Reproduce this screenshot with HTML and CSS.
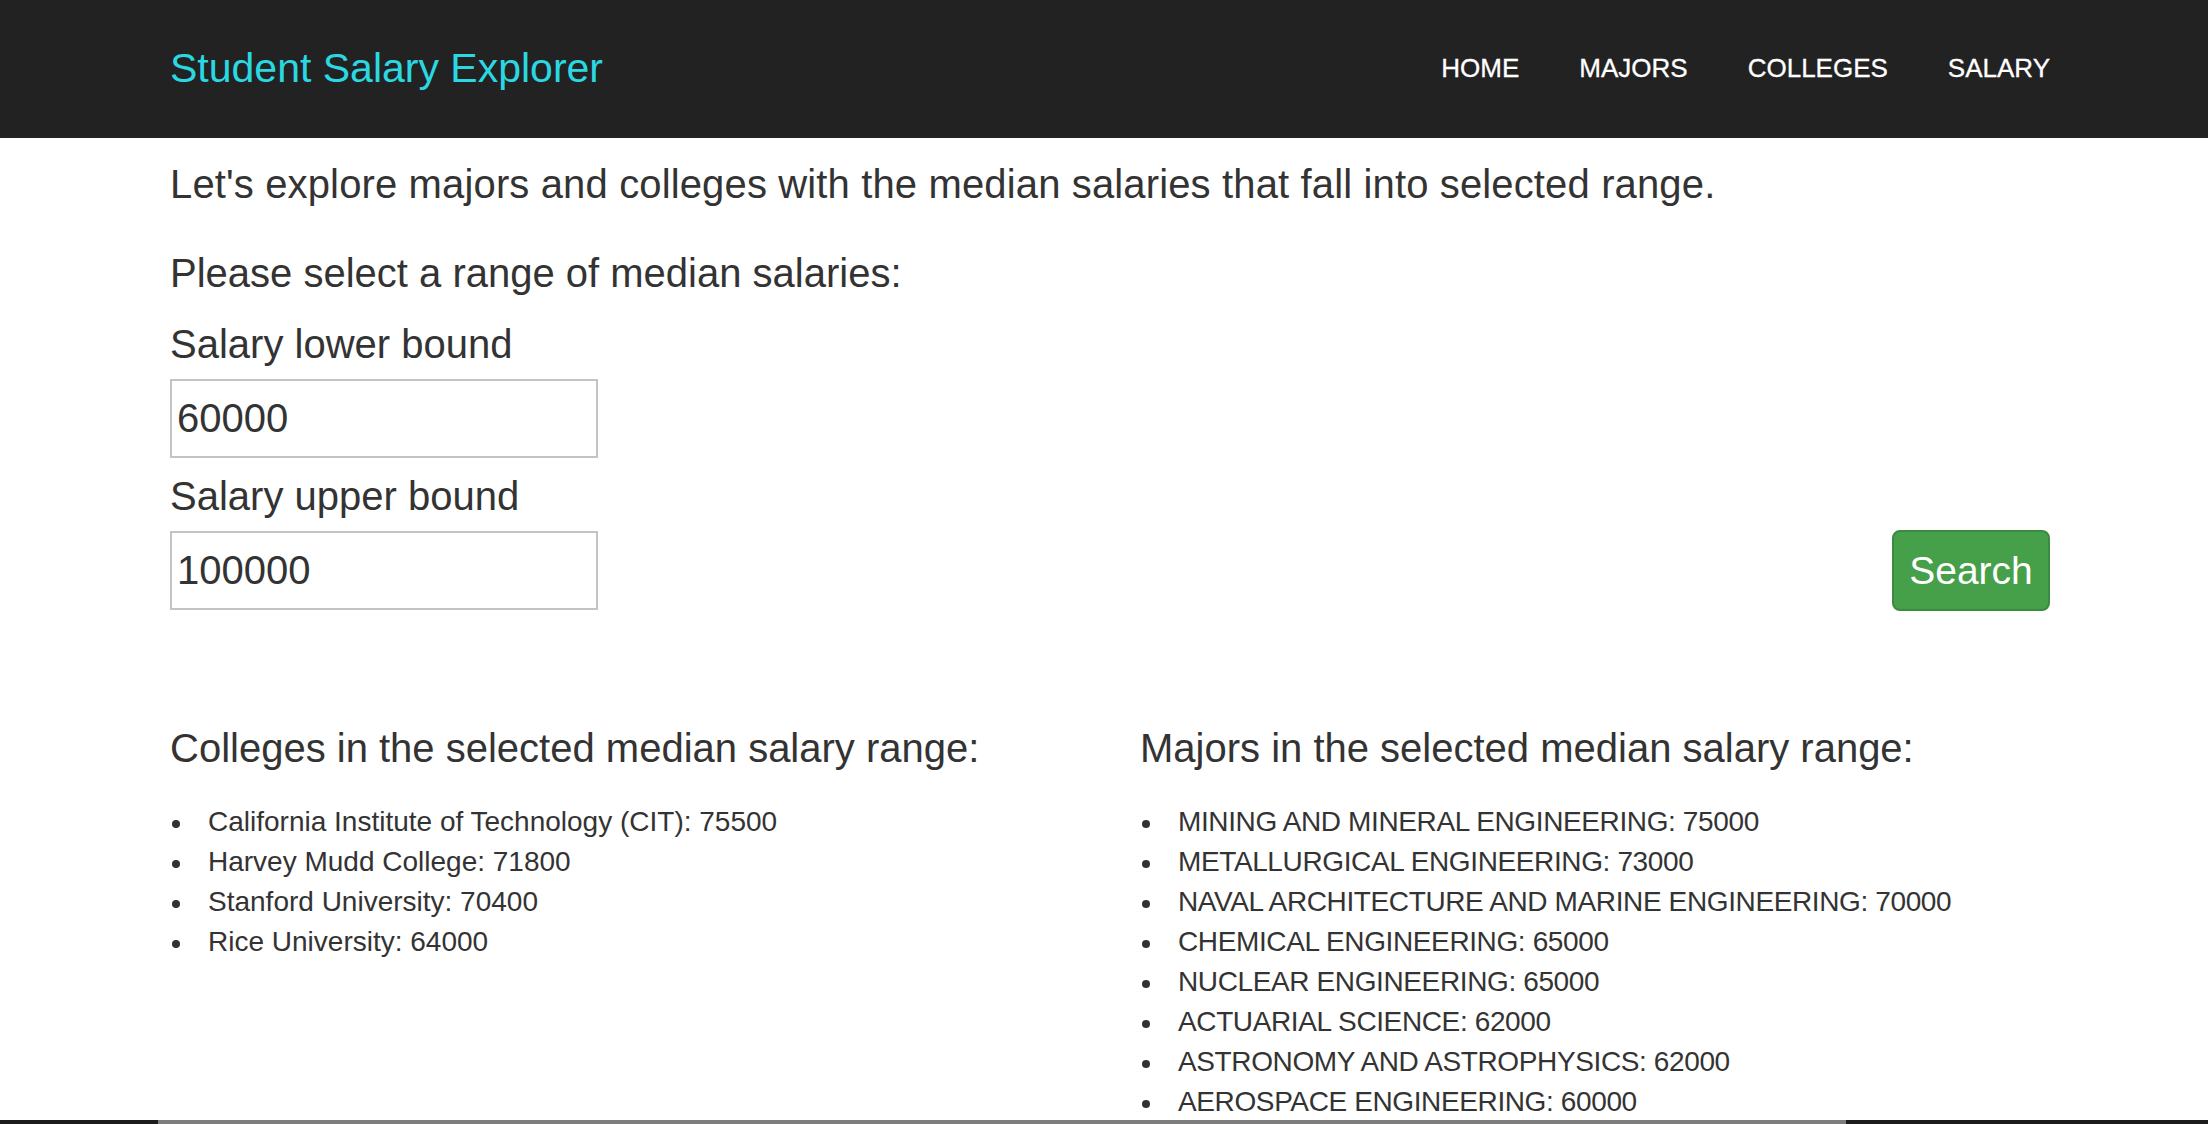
FILE: index.html
```html
<!DOCTYPE html>
<html lang="en">
<head>
<meta charset="utf-8">
<title>Student Salary Explorer</title>
<link rel="stylesheet" href="styles.css">
</head>
<body>
<nav class="navbar">
  <div class="nav-inner">
    <a class="brand" href="#">Student Salary Explorer</a>
    <ul class="nav-links">
      <li><a href="#">HOME</a></li>
      <li><a href="#">MAJORS</a></li>
      <li><a href="#">COLLEGES</a></li>
      <li><a href="#">SALARY</a></li>
    </ul>
  </div>
</nav>
<main class="container">
  <p class="lead">Let's explore majors and colleges with the median salaries that fall into selected range.</p>
  <form class="salary-form">
    <p class="prompt">Please select a range of median salaries:</p>
    <div class="form-row">
      <div class="fields">
        <label class="field-label" for="lower">Salary lower bound</label>
        <input class="field-input" id="lower" type="text" value="60000">
        <label class="field-label upper" for="upper">Salary upper bound</label>
        <input class="field-input" id="upper" type="text" value="100000">
      </div>
      <button class="btn-search" type="button">Search</button>
    </div>
  </form>
  <div class="results">
    <section class="col">
      <h3 class="col-title">Colleges in the selected median salary range:</h3>
      <ul class="result-list">
        <li>California Institute of Technology (CIT): 75500</li>
        <li>Harvey Mudd College: 71800</li>
        <li>Stanford University: 70400</li>
        <li>Rice University: 64000</li>
      </ul>
    </section>
    <section class="col">
      <h3 class="col-title">Majors in the selected median salary range:</h3>
      <ul class="result-list caps">
        <li>MINING AND MINERAL ENGINEERING: 75000</li>
        <li>METALLURGICAL ENGINEERING: 73000</li>
        <li>NAVAL ARCHITECTURE AND MARINE ENGINEERING: 70000</li>
        <li>CHEMICAL ENGINEERING: 65000</li>
        <li>NUCLEAR ENGINEERING: 65000</li>
        <li>ACTUARIAL SCIENCE: 62000</li>
        <li>ASTRONOMY AND ASTROPHYSICS: 62000</li>
        <li>AEROSPACE ENGINEERING: 60000</li>
      </ul>
    </section>
  </div>
</main>
<div class="screen-edge"></div>
</body>
</html>
```
FILE: styles.css
```css
* { box-sizing: border-box; }
html, body {
  margin: 0;
  padding: 0;
  height: 1124px;
  overflow: hidden;
}
body {
  font-family: "Liberation Sans", Arial, Helvetica, sans-serif;
  color: #333;
  background: #fff;
}
.navbar {
  background: #222;
  height: 138px;
}
.nav-inner {
  height: 100%;
  padding: 0 158px 0 170px;
  display: flex;
  align-items: center;
  justify-content: space-between;
}
.brand {
  color: #2bd8e2;
  font-size: 41px;
  text-decoration: none;
  margin-top: -2px;
}
.nav-links {
  list-style: none;
  margin: -2px 0 0;
  padding: 0;
  display: flex;
  gap: 60px;
}
.nav-links a {
  color: #fff;
  font-size: 26px;
  text-decoration: none;
  -webkit-text-stroke: 0.3px #fff;
}
.container {
  padding: 0 158px 0 170px;
}
.lead {
  font-size: 40px;
  line-height: 44px;
  letter-spacing: 0.14px;
  margin: 24px 0 0;
}
.prompt {
  font-size: 40px;
  line-height: 44px;
  margin: 45px 0 0;
}
.form-row {
  display: flex;
  justify-content: space-between;
  align-items: flex-end;
}
.fields {
  display: flex;
  flex-direction: column;
  align-items: flex-start;
}
.field-label {
  font-size: 40px;
  line-height: 44px;
  margin-top: 27px;
}
.field-label.upper {
  margin-top: 16px;
}
.field-input {
  margin-top: 13px;
  width: 428px;
  height: 79px;
  border: 2px solid #c4c4c4;
  padding: 0 5px;
  font-family: "Liberation Sans", Arial, sans-serif;
  font-size: 40px;
  color: #333;
  outline: none;
}
.btn-search {
  width: 158px;
  height: 81px;
  background: #46a049;
  border: 2px solid #3c8a3f;
  border-radius: 8px;
  color: #fff;
  font-family: "Liberation Sans", Arial, sans-serif;
  font-size: 39px;
  padding: 0;
  margin-bottom: -1px;
}
.results {
  display: flex;
  margin: 116px -30px 0;
}
.col {
  flex: 1 1 0;
  padding: 0 30px;
}
.col-title {
  font-size: 40px;
  line-height: 44px;
  font-weight: normal;
  margin: 0;
}
.result-list {
  list-style: none;
  margin: 32px 0 0;
  padding: 0;
  font-size: 28px;
  line-height: 40px;
}
.result-list li {
  display: flex;
  align-items: center;
}
.result-list li::before {
  content: "";
  flex: none;
  width: 8px;
  height: 8px;
  border-radius: 50%;
  background: #333;
  margin: 3px 28px 0 2px;
}
.result-list.caps {
  letter-spacing: -0.38px;
}
.screen-edge {
  position: fixed;
  left: 0;
  right: 0;
  bottom: 0;
  height: 4px;
  background: linear-gradient(to right, #1c1c1c 0, #1c1c1c 158px, #7d7d7d 158px, #7d7d7d 1846px, #1c1c1c 1846px);
}
```
